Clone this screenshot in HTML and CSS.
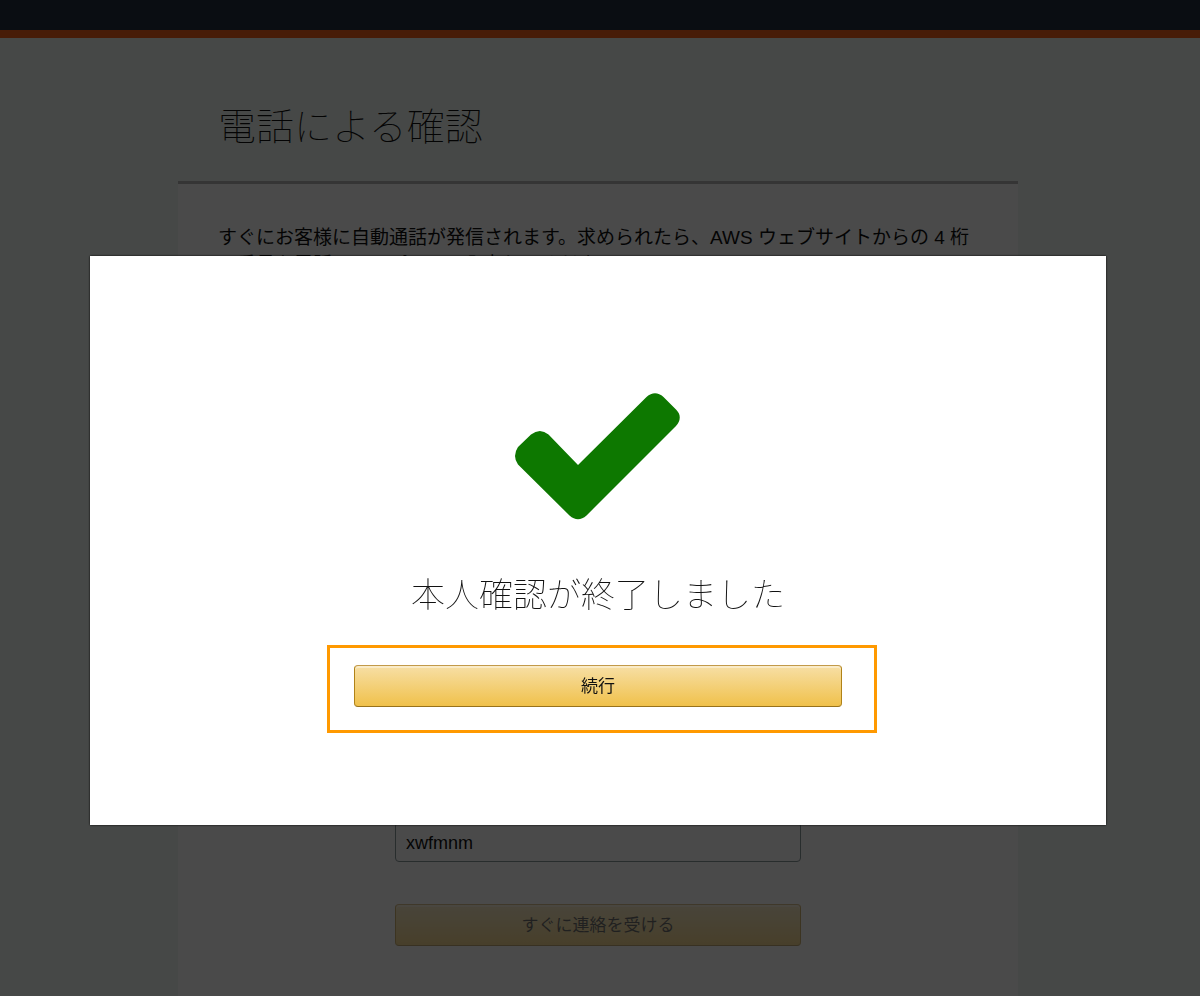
FILE: index.html
```html
<!DOCTYPE html>
<html lang="ja">
<head>
<meta charset="utf-8">
<meta name="viewport" content="width=device-width, initial-scale=1">
<title>電話による確認</title>
<link rel="stylesheet" href="styles.css">
</head>
<body>
<div class="page">
  <header class="topbar"></header>
  <main class="content">
    <h1 class="page-title">電話による確認</h1>
    <section class="panel">
      <p class="intro">すぐにお客様に自動通話が発信されます。求められたら、AWS ウェブサイトからの 4 桁の番号を電話のキーパッドで入力してください。</p>
      <form class="call-form">
        <input class="captcha-input" type="text" value="xwfmnm" aria-label="captcha">
        <button class="btn btn-muted" type="button">すぐに連絡を受ける</button>
      </form>
    </section>
  </main>
</div>
<div class="overlay">
  <div class="modal" role="dialog" aria-modal="true" aria-labelledby="modal-title">
    <svg class="check" viewBox="0 0 166 127" aria-hidden="true">
      <path d="M3 54 L16 41.500 Q25 34.500 33.500 41.500 L63 72 L131.500 4 Q140 -3.500 148.500 4 L161 16.500 Q168.500 24 161 33 L71.500 122.500 Q63 130 54.500 122.500 L3 71.500 Q-3 63 3 54 Z" fill="#0d7800"/>
    </svg>
    <h2 class="modal-title" id="modal-title">本人確認が終了しました</h2>
    <div class="action">
      <button class="btn btn-primary" type="button">続行</button>
      <span class="highlight"></span>
    </div>
  </div>
</div>
</body>
</html>
```

FILE: styles.css
```css
* {
  box-sizing: border-box;
}

body {
  margin: 0;
  color: #111;
  font-family: "Liberation Sans", "Noto Sans CJK JP", sans-serif;
}

.page {
  display: flex;
  flex-direction: column;
  min-height: 100vh;
  background: #f1f8f3;
}

.topbar {
  height: 38px;
  background: #232f3e;
  border-bottom: 8px solid #f5601c;
}

.content {
  display: flex;
  flex: 1;
  flex-direction: column;
  width: 100%;
  max-width: 844px;
  margin: 0 auto;
  padding-right: 4px;
}

.page-title,
.modal-title {
  font-family: "Noto Sans CJK JP", sans-serif;
  font-weight: 100;
}

.page-title {
  margin: 0;
  padding: 58px 40px 29px;
  font-size: 38px;
  line-height: 56px;
}

.panel {
  flex: 1;
  padding: 40px 40px 48px;
  background: #fff;
  border-top: 3px solid #b8b8b8;
}

.intro {
  margin: 0;
  font-size: 19px;
  line-height: 27px;
}

.call-form {
  display: flex;
  flex-direction: column;
  gap: 42px;
  width: 100%;
  max-width: 406px;
  margin: 544px auto 0;
}

.captcha-input {
  width: 100%;
  height: 40px;
  padding: 2px 10px 0;
  color: #111;
  font: 18px "Liberation Sans", sans-serif;
  background: #fff;
  border: 1px solid #8a9a9b;
  border-radius: 4px;
}

.btn {
  display: block;
  width: 100%;
  height: 42px;
  padding: 0 0 4px;
  color: #111;
  font: 17px "Liberation Sans", "Noto Sans CJK JP", sans-serif;
  background: linear-gradient(#f7dfa5, #f0c14b);
  border: 1px solid;
  border-color: #c29a4a #b08218 #98721b;
  border-radius: 4px;
  box-shadow: inset 0 2px 0 rgba(255, 255, 255, 0.4);
}

.btn-muted {
  opacity: 0.6;
}

.overlay {
  position: fixed;
  inset: 0;
  display: flex;
  align-items: flex-start;
  justify-content: center;
  padding: 256px 94px 0 90px;
  background: rgba(0, 0, 0, 0.71);
}

.modal {
  display: flex;
  flex: 1;
  flex-direction: column;
  align-items: center;
  max-width: 1016px;
  padding: 137px 24px 118px;
  background: #fff;
  box-shadow: 0 0 2px #000;
}

.check {
  width: 166px;
  height: 127px;
}

.modal-title {
  margin: 48px 0 47px;
  font-size: 34px;
  line-height: 50px;
}

.action {
  position: relative;
  width: 488px;
  max-width: 100%;
}

.highlight {
  position: absolute;
  inset: -20px -35px -26px -27px;
  border: 3px solid #ff9900;
  pointer-events: none;
}
```
